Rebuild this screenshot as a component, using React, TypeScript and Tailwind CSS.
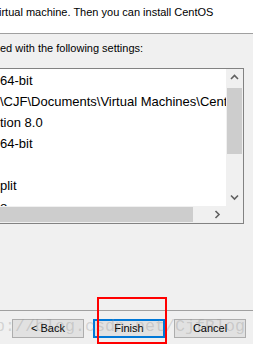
const rows = [
  '64-bit',
  '\\CJF\\Documents\\Virtual Machines\\CentOS 64-bit',
  'tion 8.0',
  '64-bit',
  '',
  'plit',
  'o',
];

const Chevron = ({ dir }: { dir: 'up' | 'down' | 'right' }) => {
  const pts =
    dir === 'up' ? '1,5 4.5,1.5 8,5' : dir === 'down' ? '1,1.5 4.5,5 8,1.5' : '1.5,1 5,4.5 1.5,8';
  const w = dir === 'right' ? 7 : 9;
  const h = dir === 'right' ? 9 : 7;
  return (
    <svg width={w} height={h} viewBox={`0 0 ${w} ${h}`}>
      <polyline points={pts} fill="none" stroke="#606060" strokeWidth="1.6" />
    </svg>
  );
};

export default function App() {
  return (
    <div className="relative w-[253px] h-[344px] overflow-hidden bg-[#f0f0f0] text-black font-['Liberation_Sans',Arial,sans-serif]">
      <div className="h-[34px] bg-white border-b border-[#a0a0a0] pt-[5px]">
        <p className="text-[11px] leading-[14px] whitespace-nowrap -ml-[1px]">
          irtual machine. Then you can install CentOS
        </p>
      </div>

      <p className="mt-[7px] text-[11px] leading-[14px] whitespace-nowrap">ed with the following settings:</p>

      <div className="mt-[13px] w-[244px] h-[156px] border-t border-r border-b border-[#828282] flex flex-col">
        <div className="flex h-[137px]">
          <div className="w-[226px] bg-white overflow-hidden pt-[1px]">
            {rows.map((r, i) => (
              <div key={i} className="h-[21px] text-[13px] leading-[21px] whitespace-nowrap">
                {r}
              </div>
            ))}
          </div>
          <div className="w-[17px] flex flex-col bg-[#f0f0f0]">
            <div className="h-[17px] flex items-center justify-center">
              <Chevron dir="up" />
            </div>
            <div className="flex-1">
              <div className="mt-[2px] mx-[1px] h-[66px] bg-[#cdcdcd]" />
            </div>
            <div className="h-[17px] flex items-center justify-center">
              <Chevron dir="down" />
            </div>
          </div>
        </div>
        <div className="flex h-[17px]">
          <div className="w-[226px] flex bg-[#f0f0f0]">
            <div className="w-[193px] my-[1px] bg-[#cdcdcd]" />
            <div className="flex-1" />
            <div className="w-[17px] flex items-center justify-center">
              <Chevron dir="right" />
            </div>
          </div>
          <div className="w-[17px] bg-[#f0f0f0]" />
        </div>
      </div>

      <div className="mt-[86px] h-px bg-[#a0a0a0]" />

      <div className="mt-[8px] flex gap-[9px] pl-[12px] text-[11px]">
        <button className="w-[72px] h-[19px] bg-[#e1e1e1] border border-[#adadad] leading-[17px]">&lt; Back</button>
        <button className="w-[72px] h-[19px] bg-[#e1e1e1] border-2 border-[#0078d7] leading-[15px]">Finish</button>
        <button className="w-[72px] h-[19px] bg-[#e1e1e1] border border-[#adadad] leading-[17px]">Cancel</button>
      </div>

      <div className="pointer-events-none absolute left-[-35px] top-[317px] whitespace-nowrap font-['Liberation_Mono',monospace] text-[16.67px] leading-[20px] text-[rgba(140,140,140,0.3)]">
        http://blog.csdn.net/CjfBlog
      </div>

      <div className="pointer-events-none absolute left-[97px] top-[297px] w-[70px] h-[47px] border-2 border-[#ff0000]" />
    </div>
  );
}
